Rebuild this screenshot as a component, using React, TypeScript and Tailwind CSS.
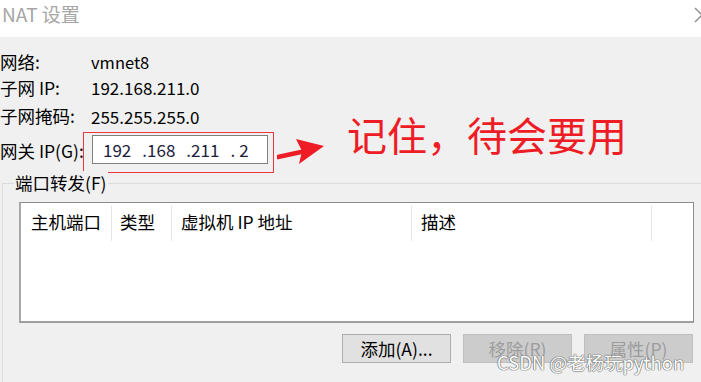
import React from "react";

const font = { fontFamily: "'Noto Sans CJK SC', 'Noto Sans', sans-serif" };

export default function App() {
  return (
    <div
      className="relative w-[701px] h-[382px] overflow-hidden bg-[#f0f0f0] text-black"
      style={font}
    >
      {/* Title bar */}
      <div className="h-[37px] bg-white flex items-start justify-between overflow-hidden">
        <div className="pl-[2px] pt-[1px] text-[19px] leading-[26px] text-[#a6a6a6]">NAT 设置</div>
        <svg width="20" height="20" viewBox="0 0 20 20" className="mt-[5px] mr-[-11px]">
          <path d="M3 3 L17 17 M17 3 L3 17" stroke="#8a8a8a" strokeWidth="1.3" fill="none" />
        </svg>
      </div>

      {/* Info rows */}
      <div className="pt-[12px] text-[17.5px]">
        <div className="flex items-center h-[26px]">
          <span className="w-[91px]">网络:</span>
          <span className="text-[16.5px]">vmnet8</span>
        </div>
        <div className="flex items-center h-[26px]">
          <span className="w-[91px]">子网 IP:</span>
          <span className="text-[17px]">192.168.211.0</span>
        </div>
        <div className="flex items-center h-[31px]">
          <span className="w-[91px]">子网掩码:</span>
          <span className="text-[17px]">255.255.255.0</span>
        </div>
        <div className="relative flex items-center h-[41px]">
          <span className="w-[83px] mt-[-3px] whitespace-nowrap">网关 IP(G):</span>
          <div className="border-[1.5px] border-[#e8383d] h-[41px] w-[191px] pl-[8px] pt-[2px]">
            <div className="h-[29px] w-[176px] bg-white border border-[#7f7f7f] flex items-center pl-[10px] text-[17px] text-[#1c1c3c] whitespace-pre">
              <span>192</span>
              <span className="ml-[11px]">.</span>
              <span>168</span>
              <span className="ml-[11px]">.</span>
              <span>211</span>
              <span className="ml-[11px]">.</span>
              <span className="ml-[4px]">2</span>
            </div>
          </div>
          <svg width="50" height="30" viewBox="0 0 50 30" className="ml-[3px] mt-[-2px]">
            <path d="M1 20 L24 15" stroke="#ee1c25" strokeWidth="4.5" strokeLinecap="round" fill="none" />
            <path d="M47 9 L19 2 L25 14 L22 27 Z" fill="#ee1c25" />
          </svg>
          <div className="absolute left-[347px] top-[-22px] text-[40px] leading-[48px] text-[#ee1c25]">
            记住，待会要用
          </div>
        </div>
      </div>

      {/* Group box */}
      <div className="relative mt-[10px] ml-[2px] h-[240px] border-t border-l border-[#dcdcdc]">
        <span className="absolute left-[11px] top-[-13px] bg-[#f0f0f0] px-[1px] text-[17.5px] leading-[24px]">
          端口转发(F)
        </span>
        <div className="ml-[16px] mt-[18px] w-[675px] h-[121px] bg-white border border-[#8c8c8c] border-b-2 border-l-2 border-b-[#a0a0a0] border-l-[#a8a8a8] text-[17.5px]">
          <div className="flex h-[38px]">
            <div className="w-[90px] pl-[10px] flex items-center">主机端口</div>
            <div className="w-px bg-[#e5e5e5] mt-[3px]" />
            <div className="w-[59px] pl-[8px] flex items-center">类型</div>
            <div className="w-px bg-[#e5e5e5] mt-[3px]" />
            <div className="w-[239px] pl-[9px] flex items-center">虚拟机 IP 地址</div>
            <div className="w-px bg-[#e5e5e5] mt-[3px]" />
            <div className="w-[239px] pl-[9px] flex items-center">描述</div>
            <div className="w-px bg-[#e5e5e5] mt-[3px]" />
          </div>
        </div>
        <div className="flex justify-end gap-[12px] mt-[11px] pr-[8px] text-[17.5px]">
          <button className="w-[109px] h-[29px] bg-[#e1e1e1] border border-[#adadad] flex items-center justify-center leading-none">
            添加(A)...
          </button>
          <button className="w-[109px] h-[29px] bg-[#cccccc] border border-[#bfbfbf] text-[#9d9d9d] flex items-center justify-center leading-none">
            移除(R)
          </button>
          <button className="w-[109px] h-[29px] bg-[#cccccc] border border-[#bfbfbf] text-[#9d9d9d] flex items-center justify-center leading-none">
            属性(P)
          </button>
        </div>
      </div>

      {/* Watermark */}
      <div className="absolute left-[497px] top-[349px] text-[18.5px] leading-[26px] text-white [text-shadow:0_0_1px_#555,0_0_1px_#555,0_0_1px_#777]">
        CSDN @老杨玩python
      </div>
    </div>
  );
}
